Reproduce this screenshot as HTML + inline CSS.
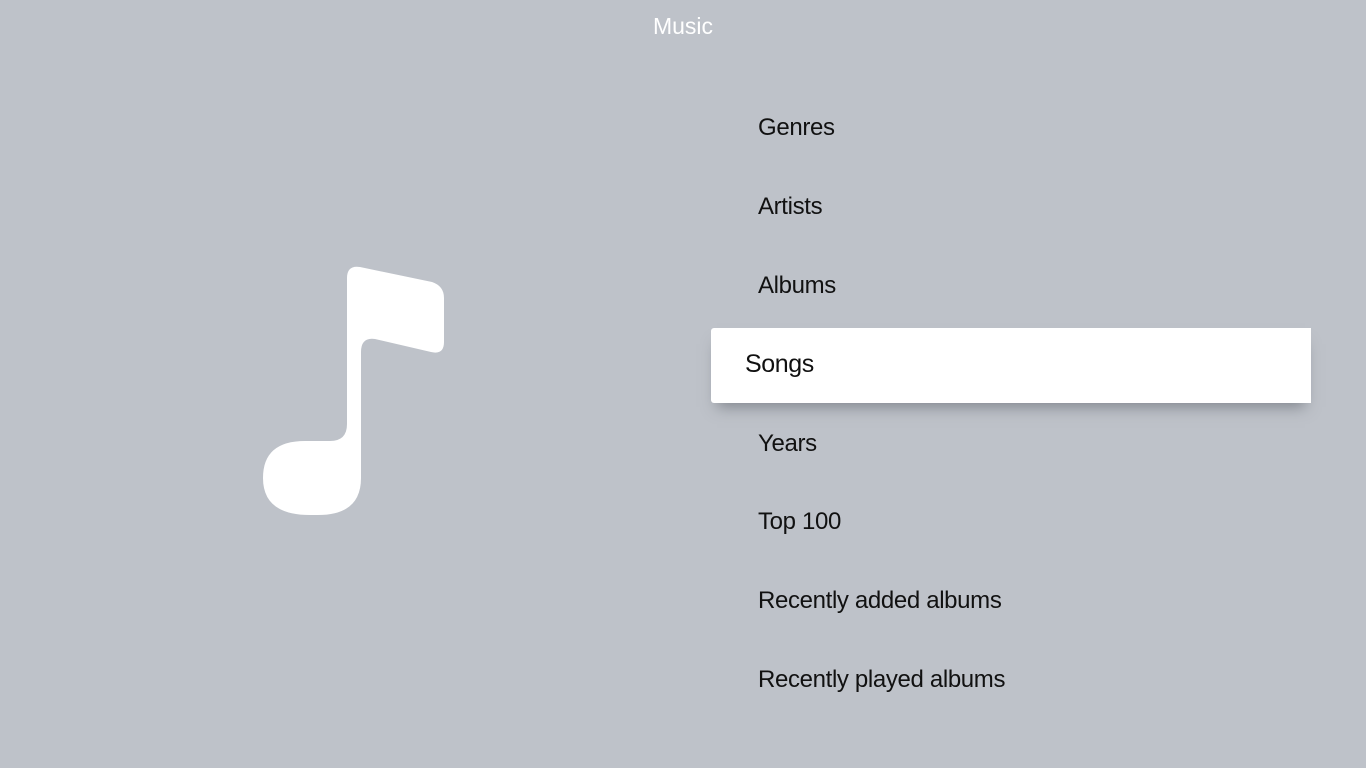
<!DOCTYPE html>
<html><head><style>
body{margin:0;width:1366px;height:768px;background:#bec2c9;font-family:"Liberation Sans",sans-serif;position:relative;overflow:hidden}
.t{position:absolute;top:13px;left:0;width:1366px;text-align:center;color:#fff;font-size:23px}
.i{position:absolute;left:758px;font-size:24px;color:#111;line-height:30px;letter-spacing:-0.35px}
.sel{position:absolute;left:711px;top:328px;width:600px;height:75px;background:#fff;border-radius:3px 0 0 3px;box-shadow:0 10px 14px -6px rgba(80,85,92,.55)}
.sel span{position:absolute;left:34px;top:21px;font-size:25px;color:#111;line-height:30px;letter-spacing:-0.4px}
</style></head><body>
<div class="t">Music</div>
<svg style="position:absolute;left:0;top:0" width="700" height="768">
<path fill="#fff" d="M347 278 Q347 265 360 267 L432 282 Q444 286 444 298 L444 342 Q444 355 431 352 L375 339 Q361 337 361 352 L361 478 Q361 515 318 515 L310 515 Q263 515 263 478 Q263 441 305 441 L330 441 Q347 441 347 424 Z"/>
</svg>
<div class="i" style="top:113px">Genres</div>
<div class="i" style="top:192px">Artists</div>
<div class="i" style="top:271px">Albums</div>
<div class="sel"><span>Songs</span></div>
<div class="i" style="top:429px">Years</div>
<div class="i" style="top:507px">Top 100</div>
<div class="i" style="top:586px">Recently added albums</div>
<div class="i" style="top:665px">Recently played albums</div>
</body></html>
